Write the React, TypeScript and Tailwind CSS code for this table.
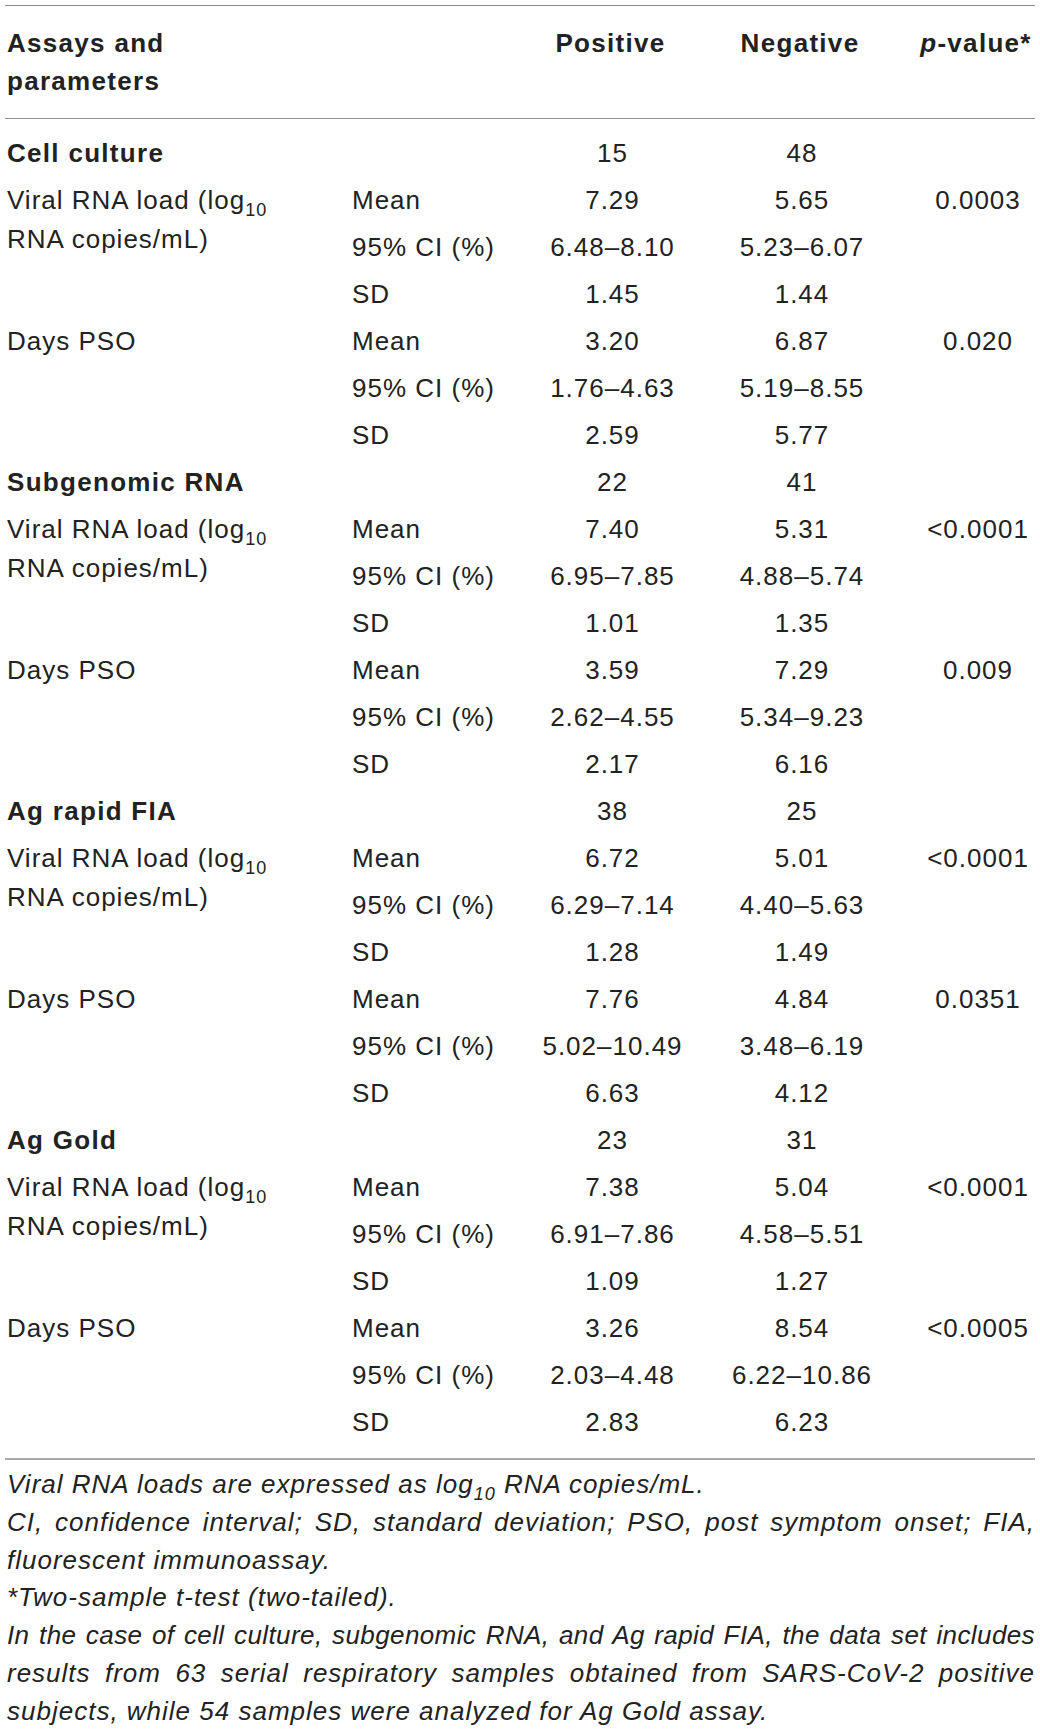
import type { ReactNode } from 'react';

type Param = {
  label: ReactNode;
  p: string;
  rows: [string, string, string][];
};

type Group = {
  name: string;
  pos: string;
  neg: string;
  params: Param[];
};

const Log10 = () => (
  <>
    log<sub className="text-[18px] relative top-[1px] align-sub leading-none">10</sub>
  </>
);

const viralLabel = (
  <>
    Viral RNA load (<Log10 />
    <br />
    RNA copies/mL)
  </>
);

const groups: Group[] = [
  {
    name: 'Cell culture',
    pos: '15',
    neg: '48',
    params: [
      {
        label: viralLabel,
        p: '0.0003',
        rows: [
          ['Mean', '7.29', '5.65'],
          ['95% CI (%)', '6.48–8.10', '5.23–6.07'],
          ['SD', '1.45', '1.44'],
        ],
      },
      {
        label: 'Days PSO',
        p: '0.020',
        rows: [
          ['Mean', '3.20', '6.87'],
          ['95% CI (%)', '1.76–4.63', '5.19–8.55'],
          ['SD', '2.59', '5.77'],
        ],
      },
    ],
  },
  {
    name: 'Subgenomic RNA',
    pos: '22',
    neg: '41',
    params: [
      {
        label: viralLabel,
        p: '<0.0001',
        rows: [
          ['Mean', '7.40', '5.31'],
          ['95% CI (%)', '6.95–7.85', '4.88–5.74'],
          ['SD', '1.01', '1.35'],
        ],
      },
      {
        label: 'Days PSO',
        p: '0.009',
        rows: [
          ['Mean', '3.59', '7.29'],
          ['95% CI (%)', '2.62–4.55', '5.34–9.23'],
          ['SD', '2.17', '6.16'],
        ],
      },
    ],
  },
  {
    name: 'Ag rapid FIA',
    pos: '38',
    neg: '25',
    params: [
      {
        label: viralLabel,
        p: '<0.0001',
        rows: [
          ['Mean', '6.72', '5.01'],
          ['95% CI (%)', '6.29–7.14', '4.40–5.63'],
          ['SD', '1.28', '1.49'],
        ],
      },
      {
        label: 'Days PSO',
        p: '0.0351',
        rows: [
          ['Mean', '7.76', '4.84'],
          ['95% CI (%)', '5.02–10.49', '3.48–6.19'],
          ['SD', '6.63', '4.12'],
        ],
      },
    ],
  },
  {
    name: 'Ag Gold',
    pos: '23',
    neg: '31',
    params: [
      {
        label: viralLabel,
        p: '<0.0001',
        rows: [
          ['Mean', '7.38', '5.04'],
          ['95% CI (%)', '6.91–7.86', '4.58–5.51'],
          ['SD', '1.09', '1.27'],
        ],
      },
      {
        label: 'Days PSO',
        p: '<0.0005',
        rows: [
          ['Mean', '3.26', '8.54'],
          ['95% CI (%)', '2.03–4.48', '6.22–10.86'],
          ['SD', '2.83', '6.23'],
        ],
      },
    ],
  },
];

const cols = 'grid grid-cols-[345px_170px_181px_198px_136px]';

function GroupRows({ group }: { group: Group }) {
  return (
    <>
      <div className="font-bold tracking-[1.3px]">{group.name}</div>
      <div />
      <div className="text-center">{group.pos}</div>
      <div className="text-center">{group.neg}</div>
      <div />
      {group.params.map((param, i) => (
        <ParamRows key={i} param={param} />
      ))}
    </>
  );
}

function ParamRows({ param }: { param: Param }) {
  return (
    <>
      <div className="row-span-3 self-start pt-[4px] leading-[39px]">{param.label}</div>
      {param.rows.map(([stat, pos, neg], i) => (
        <Row key={stat} stat={stat} pos={pos} neg={neg} p={i === 0 ? param.p : ''} />
      ))}
    </>
  );
}

function Row({ stat, pos, neg, p }: { stat: string; pos: string; neg: string; p: string }) {
  return (
    <>
      <div>{stat}</div>
      <div className="text-center">{pos}</div>
      <div className="text-center">{neg}</div>
      <div className="text-center pl-[18px]">{p}</div>
    </>
  );
}

const fullLine = 'text-justify [text-align-last:justify]';

export default function App() {
  return (
    <div className="min-h-screen bg-white px-[5px] pt-[5px] font-['Liberation_Sans',Arial,sans-serif] text-[26px] tracking-[1px] text-[#222]">
      <div className="w-[1030px]">
        <div className="border-t border-[#8f8f8f]" />
        <div className={`${cols} py-[18px] leading-[38px] font-bold tracking-[1.3px]`}>
          <div className="pl-[2px]">
            Assays and
            <br />
            parameters
          </div>
          <div />
          <div className="text-center">Positive</div>
          <div className="text-center">Negative</div>
          <div className="text-center pl-[18px]">
            <span className="italic">p</span>-value*
          </div>
        </div>
        <div className="border-t border-[#8f8f8f]" />
        <div className={`${cols} auto-rows-[47px] items-center pl-[2px] pt-[11px] pb-[12px] leading-[39px]`}>
          {groups.map((g) => (
            <GroupRows key={g.name} group={g} />
          ))}
        </div>
        <div className="border-t-2 border-[#a8a8a8]" />
        <div className="pt-[6px] italic leading-[37.8px] pl-[2px] tracking-[1px]">
          <div>
            Viral RNA loads are expressed as <Log10 /> RNA copies/mL.
          </div>
          <div className={fullLine}>
            CI, confidence interval; SD, standard deviation; PSO, post symptom onset; FIA,
          </div>
          <div>fluorescent immunoassay.</div>
          <div>*Two-sample t-test (two-tailed).</div>
          <div className={`${fullLine} whitespace-nowrap tracking-[0.4px]`}>
            In the case of cell culture, subgenomic RNA, and Ag rapid FIA, the data set includes
          </div>
          <div className={fullLine}>
            results from 63 serial respiratory samples obtained from SARS-CoV-2 positive
          </div>
          <div>subjects, while 54 samples were analyzed for Ag Gold assay.</div>
        </div>
      </div>
    </div>
  );
}
